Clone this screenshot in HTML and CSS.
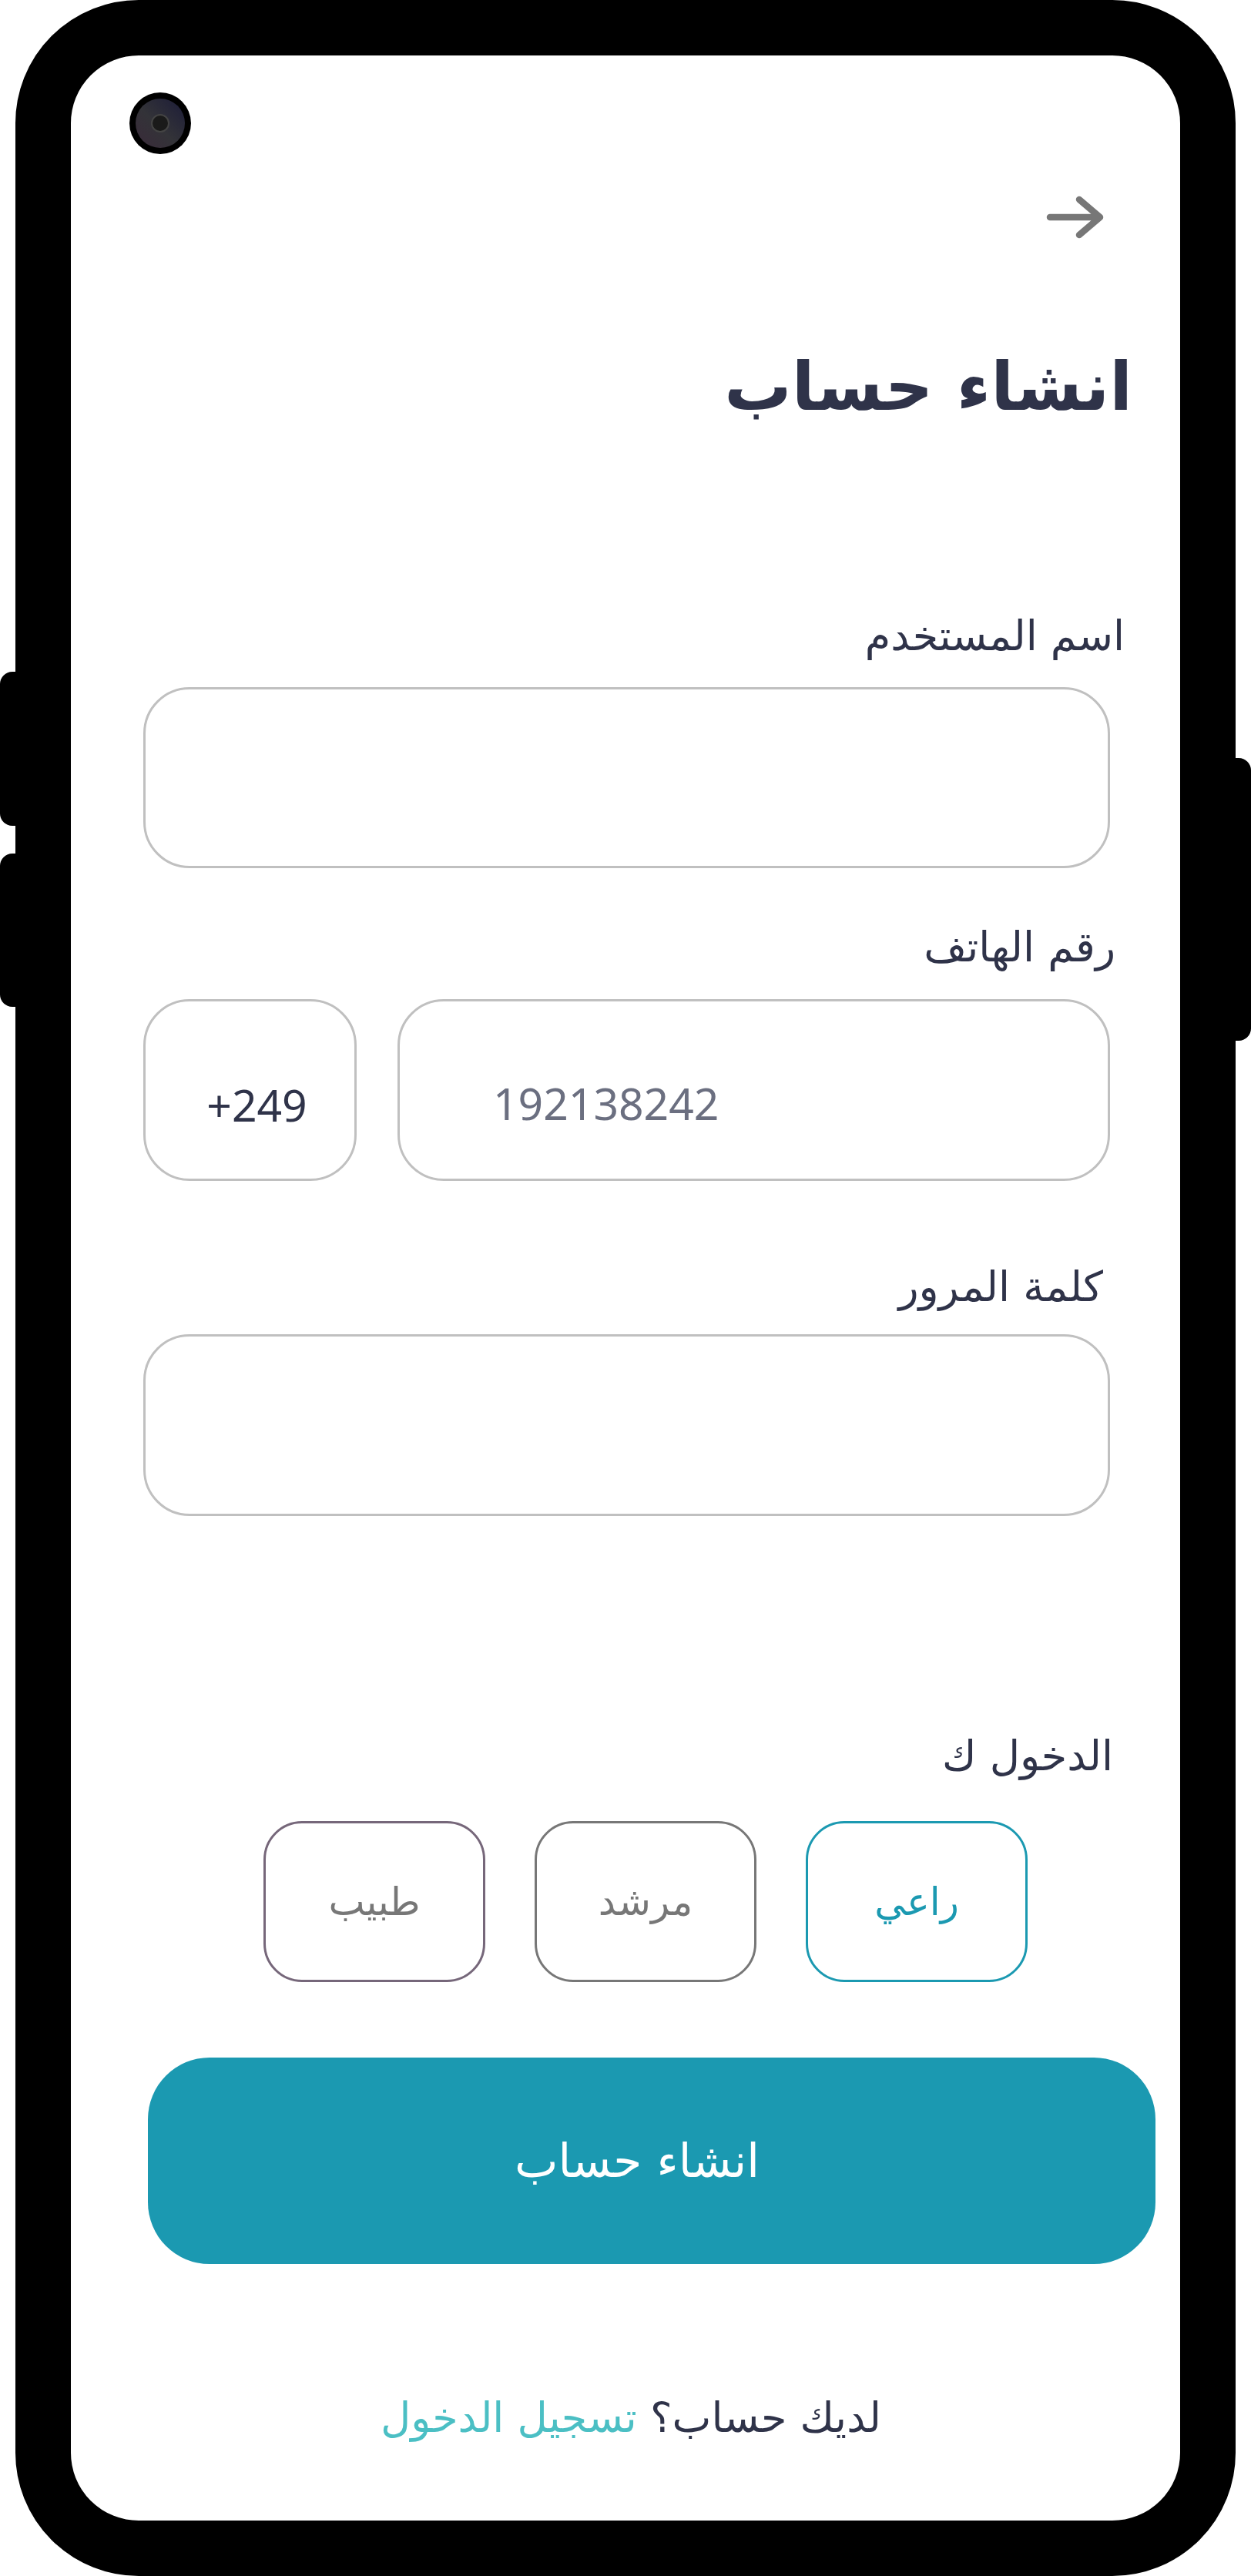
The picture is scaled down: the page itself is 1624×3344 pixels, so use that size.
FILE: index.html
```html
<!DOCTYPE html>
<html lang="ar">
<head>
<meta charset="utf-8">
<title>انشاء حساب</title>
<link rel="stylesheet" href="styles.css">
</head>
<body>
<div class="device">
  <div class="side-btn side-left side-1"></div>
  <div class="side-btn side-left side-2"></div>
  <div class="side-btn side-right"></div>
  <div class="frame">
    <div class="screen">
      <div class="camera"><div class="camera-lens"><div class="camera-dot"></div></div></div>
      <div class="topbar">
        <svg class="back-arrow" width="80" height="60" viewBox="0 0 80 60">
          <path d="M5 28 H70 M43 5 L70 28 L43 51" fill="none" stroke="#777777" stroke-width="8.5" stroke-linecap="round" stroke-linejoin="round"/>
        </svg>
      </div>
      <h1 class="title">انشاء حساب</h1>

      <div class="label label-user">اسم المستخدم</div>
      <div class="form-wide"><div class="field field-user"></div></div>

      <div class="label label-phone">رقم الهاتف</div>
      <div class="form-wide phone-row">
        <div class="field field-code"><span class="code-text">+249</span></div>
        <div class="field field-phone"><span class="phone-text">192138242</span></div>
      </div>

      <div class="label label-pass">كلمة المرور</div>
      <div class="form-wide"><div class="field field-pass"></div></div>

      <div class="label label-role">الدخول ك</div>
      <div class="roles">
        <div class="role role-active">راعي</div>
        <div class="role role-guide">مرشد</div>
        <div class="role role-doctor">طبيب</div>
      </div>

      <div class="submit"><span class="submit-text">انشاء حساب</span></div>

      <div class="footer"><span class="footer-q">لديك حساب؟</span> <span class="footer-link">تسجيل الدخول</span></div>
    </div>
  </div>
</div>
</body>
</html>
```

FILE: styles.css
```css
* { box-sizing: border-box; }
html, body { margin: 0; padding: 0; background: #ffffff; }
body { font-family: "DejaVu Sans", sans-serif; color: #2f3349; }

.device { position: relative; width: 1624px; height: 3344px; }

.frame {
  margin-left: 20px;
  width: 1584px;
  height: 3344px;
  border: 72px solid #000;
  border-radius: 160px;
  background: #fff;
}

.side-btn { position: absolute; background: #000; width: 22px; }
.side-left { left: 0; border-radius: 16px 0 0 16px; }
.side-1 { top: 872px; height: 200px; }
.side-2 { top: 1108px; height: 199px; }
.side-right { right: 0; top: 984px; height: 367px; border-radius: 0 16px 16px 0; }

.screen { position: relative; height: 100%; direction: rtl; }

.camera {
  position: absolute; left: 76px; top: 48px;
  width: 80px; height: 80px; border-radius: 50%;
  background: #000;
  display: flex; align-items: center; justify-content: center;
}
.camera-lens {
  width: 64px; height: 64px; border-radius: 50%;
  background: linear-gradient(45deg, #3a2a3a 0%, #333338 45%, #1c1c38 100%);
  display: flex; align-items: center; justify-content: center;
}
.camera-dot {
  width: 24px; height: 24px; border-radius: 50%;
  background: #1a1a1a; border: 2px solid #444;
}

.topbar { padding-top: 182px; padding-right: 94px; height: 242px; }
.back-arrow { display: block; }

.title {
  margin: 128px 0 0 0;
  padding-right: 62px;
  font-size: 87px;
  line-height: 120px;
  font-weight: bold;
  color: #2f3349;
}

.label { font-size: 54px; line-height: 60px; color: #2f3349; }
.label-user { margin-top: 234px; padding-right: 72px; }
.label-phone { margin-top: 73px; padding-right: 84px; }
.label-pass { margin-top: 108px; padding-right: 100px; }
.label-role { margin-top: 282px; padding-right: 87px; }

.form-wide { margin-left: 94px; margin-right: 91px; }
.field { border: 3px solid #c0c0c0; border-radius: 60px; background: #fff; }
.field-user { margin-top: 36px; height: 235px; }
.field-pass { margin-top: 31px; height: 236px; }

.phone-row { margin-top: 37px; display: flex; direction: ltr; gap: 53px; height: 236px; }
.field-code { width: 277px; height: 236px; display: flex; align-items: center; justify-content: center; padding: 38px 0 0 18px; }
.field-phone { flex: 1; height: 236px; display: flex; align-items: center; padding: 34px 0 0 121px; }
.code-text, .phone-text { font-family: "Noto Sans", sans-serif; font-size: 57px; line-height: 60px; }
.code-text { color: #2f3349; }
.phone-text { color: #6b6f80; }

.roles { margin-top: 54px; padding-right: 198px; display: flex; gap: 64px; }
.role {
  width: 288px; height: 209px;
  border: 3px solid #777; border-radius: 50px;
  display: flex; align-items: center; justify-content: center;
  font-size: 50px; color: #777;
}
.role-active { border-color: #1b99b1; color: #1b99b1; }
.role-doctor { border-color: #76677a; }

.submit {
  margin: 98px 32px 0 100px;
  height: 268px;
  border-radius: 80px;
  background: #1b99b1;
  color: #fff;
  font-size: 60px;
  display: flex; align-items: center; justify-content: center;
  padding-right: 38px;
}

.footer { margin-top: 170px; text-align: center; font-size: 54px; line-height: 60px; padding-left: 14px; }
.footer-q { color: #2f3349; }
.footer-link { color: #4bbfc4; }
```
